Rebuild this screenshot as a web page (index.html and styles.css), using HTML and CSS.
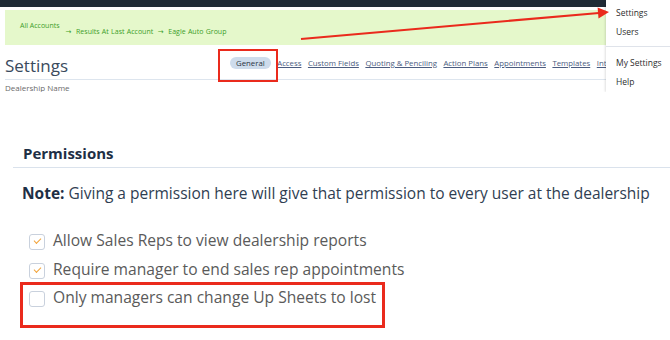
FILE: index.html
```html
<!DOCTYPE html>
<html lang="en">
<head>
  <meta charset="UTF-8" />
  <title>Settings - Permissions</title>
  <link rel="stylesheet" href="styles.css">
</head>
<body>
  <div class="shot">
    <div class="topbar"></div>
    <div class="crumbs">
      <span>All Accounts</span>
      <span class="crumb-trail">&rarr;&nbsp; Results At Last Account &nbsp;&rarr;&nbsp; Eagle Auto Group</span>
    </div>
    <div class="head">
      <h1 class="page-title">Settings</h1>
      <nav class="tabs">
        <span class="tab active">General</span>
        <a href="#">Access</a>
        <a href="#">Custom Fields</a>
        <a href="#">Quoting &amp; Penciling</a>
        <a href="#">Action Plans</a>
        <a href="#">Appointments</a>
        <a href="#">Templates</a>
        <a href="#">Integrations</a>
      </nav>
    </div>
    <div class="dealer">Dealership Name</div>

    <ul class="menu">
      <li>Settings</li>
      <li>Users</li>
      <li class="menu-sep"></li>
      <li>My Settings</li>
      <li>Help</li>
    </ul>
  </div>

  <section class="perm">
    <h2>Permissions</h2>
    <p class="note"><b>Note:</b> Giving a permission here will give that permission to every user at the dealership</p>
    <ul class="checks">
      <li><span class="box checked"></span>Allow Sales Reps to view dealership reports</li>
      <li><span class="box checked"></span>Require manager to end sales rep appointments</li>
      <li><span class="box"></span>Only managers can change Up Sheets to lost</li>
    </ul>
  </section>

  <!-- annotations -->
  <div class="mark mark-tab"></div>
  <div class="mark mark-row"></div>
  <svg class="arrow" width="670" height="340" viewBox="0 0 670 340">
    <line x1="301" y1="39" x2="599" y2="13" stroke="#ea2a1c" stroke-width="2.2" />
    <polygon points="609,12 597.6,7.5 598.5,18.5" fill="#ea2a1c" />
  </svg>
</body>
</html>
```

FILE: styles.css
```css
* {
  box-sizing: border-box;
  margin: 0;
  padding: 0;
}

body {
  width: 670px;
  height: 340px;
  overflow: hidden;
  position: relative;
  background: #ffffff;
  font-family: 'Open Sans', 'DejaVu Sans', sans-serif;
}

.shot {
  height: 92px;
  position: relative;
  overflow: hidden;
}

.topbar {
  height: 7px;
  background: #1f2b36;
  margin-right: 64px;
}

.crumbs {
  display: flex;
  align-items: flex-start;
  gap: 6px;
  height: 35px;
  margin: 3px 64px 0 5px;
  padding: 11px 0 0 15px;
  background: #e5f8cb;
  font-size: 7px;
  line-height: 9px;
  color: #3c9e2a;
}

.crumb-trail {
  margin-top: 6px;
  word-spacing: 0.5px;
}

.head {
  display: flex;
  align-items: flex-start;
  width: 601px;
  height: 35px;
  margin-left: 5px;
  padding-top: 11px;
  border-bottom: 1.5px solid #dde5ee;
  white-space: nowrap;
  overflow: hidden;
}

.page-title {
  flex-shrink: 0;
  width: 225px;
  font-size: 17px;
  line-height: 20px;
  font-weight: 400;
  color: #3a4a5d;
}

.tabs {
  display: flex;
  align-items: center;
  gap: 6.5px;
  margin-top: 1px;
  font-size: 7.8px;
  line-height: 12px;
}

.tabs a {
  color: #4b5c80;
  text-decoration: underline;
}

.tab.active {
  padding: 0 6px;
  border-radius: 6px;
  background: #cedcec;
  color: #2a3442;
}

.dealer {
  margin: 2px 0 0 5px;
  font-size: 8px;
  line-height: 12px;
  color: #6a6a6a;
}

.menu {
  position: absolute;
  top: 0;
  right: 0;
  width: 64px;
  height: 92px;
  padding-top: 3px;
  list-style: none;
  background: #ffffff;
  box-shadow: -1px 0 2px rgba(0, 0, 0, 0.12);
  font-size: 8.5px;
  line-height: 19px;
  color: #2d2d2d;
}

.menu li {
  padding-left: 10px;
}

.menu .menu-sep {
  height: 1px;
  margin: 5px 0 6px;
  padding: 0;
  background: #dfe3ea;
}

.perm {
  margin-top: 52px;
  padding-left: 13px;
}

.perm h2 {
  padding: 0 0 5px 10px;
  border-bottom: 1.5px solid #dae2ec;
  font-size: 15px;
  line-height: 18px;
  font-weight: 700;
  color: #1e2f45;
}

.note {
  margin-top: 15px;
  padding-left: 9px;
  font-size: 15.5px;
  line-height: 20px;
  color: #2f3e52;
  white-space: nowrap;
}

.note b {
  font-weight: 700;
  color: #1e2f45;
}

.checks {
  list-style: none;
  margin-top: 23px;
  padding-left: 16px;
}

.checks li {
  display: flex;
  align-items: center;
  gap: 8px;
  height: 28.5px;
  font-size: 15.6px;
  color: #5a5a5a;
  white-space: nowrap;
}

.box {
  position: relative;
  flex-shrink: 0;
  width: 16px;
  height: 16px;
  margin-top: 4px;
  border: 1px solid #c9d1dd;
  border-radius: 3px;
  background: #ffffff;
}

.box.checked::after {
  content: '';
  position: absolute;
  left: 4px;
  top: 3px;
  width: 6px;
  height: 3px;
  border-left: 1.5px solid #f2a43a;
  border-bottom: 1.5px solid #f2a43a;
  transform: rotate(-45deg);
}

.mark {
  position: absolute;
  border: 2px solid #ea2a1c;
}

.mark-tab {
  left: 218px;
  top: 49px;
  width: 60px;
  height: 33px;
}

.mark-row {
  left: 20px;
  top: 282px;
  width: 365px;
  height: 46px;
  border-width: 3px;
}

.arrow {
  position: absolute;
  left: 0;
  top: 0;
  pointer-events: none;
}
```
